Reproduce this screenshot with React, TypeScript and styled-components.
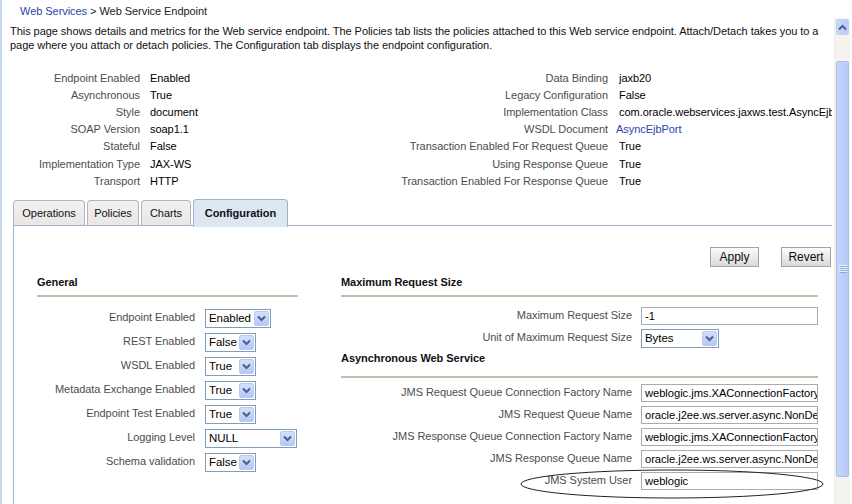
import React from "react";
import styled, { createGlobalStyle } from "styled-components";

const Global = createGlobalStyle`
  html, body { margin: 0; padding: 0; background: #fff; }
  body { font-family: Tahoma, "Liberation Sans", Arial, sans-serif; font-size: 11px; color: #000; overflow: hidden; letter-spacing: -0.05px; }
  * { box-sizing: border-box; }
`;

const Page = styled.div`
  width: 852px;
  height: 504px;
  position: relative;
  display: flex;
  flex-direction: column;
  border-left: 2px solid #c9d7ec;
  overflow: hidden;
`;

const Splitter = styled.div`
  position: absolute;
  left: -2px;
  top: 243px;
  width: 2px;
  height: 32px;
  background: #8c8c8c;
`;

const Breadcrumb = styled.div`
  height: 18px;
  padding: 4px 0 0 18px;
  line-height: 14px;
  color: #222;
`;

const Link = styled.span`
  color: #2b45a6;
`;

const Body = styled.div`
  flex: 1;
  display: flex;
  min-height: 0;
`;

const Main = styled.div`
  width: 830px;
  flex: none;
  overflow: hidden;
`;

const Description = styled.p`
  margin: 0;
  padding: 6px 0 0 8px;
  line-height: 14px;
  white-space: nowrap;
  color: #111;
  letter-spacing: -0.05px;
`;

const Info = styled.div`
  display: flex;
  margin-top: 17px;
`;

const InfoGrid = styled.div<{ $label: number; $gap: number; $w: number }>`
  display: grid;
  grid-template-columns: ${(p) => p.$label}px auto;
  column-gap: ${(p) => p.$gap}px;
  grid-auto-rows: 17.2px;
  width: ${(p) => p.$w}px;
  align-items: center;
  white-space: nowrap;
`;

const InfoLabel = styled.div`
  text-align: right;
  color: #4d4d4d;
`;

const InfoValue = styled.div<{ $link?: boolean }>`
  color: ${(p) => (p.$link ? "#2b45a6" : "#000")};
  overflow: hidden;
  margin-left: ${(p) => (p.$link ? "-3px" : "0")};
`;

const Tabs = styled.div`
  display: flex;
  align-items: flex-end;
  gap: 2px;
  margin: 9px 0 0 11px;
  height: 28px;
  position: relative;
  z-index: 1;
`;

const Tab = styled.div<{ $active?: boolean; $w: number }>`
  width: ${(p) => p.$w}px;
  height: ${(p) => (p.$active ? 28 : 26)}px;
  border: 1px solid ${(p) => (p.$active ? "#9fb4cf" : "#b4b4b4")};
  border-bottom: ${(p) => (p.$active ? "none" : "1px solid #9fb4cf")};
  border-radius: 4px 4px 0 0;
  background: ${(p) => (p.$active ? "#dde7f2" : "linear-gradient(#f2f2f2, #e6e6e6)")};
  font-weight: ${(p) => (p.$active ? "bold" : "normal")};
  color: #111;
  display: flex;
  align-items: center;
  justify-content: center;
  padding-bottom: ${(p) => (p.$active ? 1 : 0)}px;
  margin-bottom: ${(p) => (p.$active ? -1 : 0)}px;
`;

const Panel = styled.div`
  margin-left: 11px;
  margin-top: -1px;
  border-left: 1px solid #9fb4cf;
  border-top: 1px solid #9fb4cf;
  height: 300px;
  position: relative;
`;

const Toolbar = styled.div`
  display: flex;
  justify-content: flex-end;
  gap: 22px;
  padding: 21px 1px 0 0;
  height: 42px;
`;

const Button = styled.div<{ $w: number }>`
  width: ${(p) => p.$w}px;
  height: 20px;
  border: 1px solid #a3a3a3;
  background: linear-gradient(#fbfbfb, #e7e7e7 60%, #dadada);
  display: flex;
  align-items: center;
  justify-content: center;
  color: #111;
  font-size: 12px;
`;

const Columns = styled.div`
  display: flex;
  padding-left: 23px;
  gap: 43px;
`;

const Column = styled.div<{ $w: number }>`
  width: ${(p) => p.$w}px;
`;

const SectionHeader = styled.div<{ $pt: number; $pb: number }>`
  font-weight: bold;
  color: #111;
  line-height: 14px;
  padding-top: ${(p) => p.$pt}px;
  padding-bottom: ${(p) => p.$pb}px;
  border-bottom: 2px solid #c4bdae;
`;

const Form = styled.div<{ $label: number; $gap: number; $row: number; $mt: number }>`
  display: grid;
  grid-template-columns: ${(p) => p.$label}px auto;
  column-gap: ${(p) => p.$gap}px;
  grid-auto-rows: ${(p) => p.$row}px;
  align-items: center;
  margin-top: ${(p) => p.$mt}px;
  white-space: nowrap;
`;

const FormLabel = styled.div`
  text-align: right;
  color: #4d4d4d;
  margin-top: -3px;
  position: relative;
`;

const SelectBox = styled.div<{ $w: number }>`
  width: ${(p) => p.$w}px;
  height: 19px;
  border: 1px solid #7f9db9;
  background: #fff;
  display: flex;
  align-items: center;
  justify-content: space-between;
  padding: 0 1px 0 3px;
  color: #000;
  font-size: 11.5px;
`;

const DropBtn = styled.div`
  width: 15px;
  height: 15px;
  border-radius: 2px;
  background: linear-gradient(#d3e0fd, #b5c8f7);
  border: 1px solid #b9c9ef;
  display: flex;
  align-items: center;
  justify-content: center;
`;

const TextInput = styled.div<{ $w: number }>`
  width: ${(p) => p.$w}px;
  height: 18px;
  border: 1px solid #a8acb0;
  background: #fff;
  padding: 0 3px;
  display: flex;
  align-items: center;
  overflow: hidden;
  color: #000;
  font-size: 11.2px;
`;

const Oval = styled.svg`
  position: absolute;
  left: 179px;
  top: -5px;
  pointer-events: none;
  overflow: visible;
`;

const Scrollbar = styled.div`
  width: 16px;
  margin-left: 2px;
  background: #f4f3ee;
  display: flex;
  flex-direction: column;
  border-left: 1px solid #eeede5;
`;

const ScrollBtn = styled.div`
  height: 16px;
  margin: 1px 1px 0 1px;
  border-radius: 2px;
  background: linear-gradient(90deg, #c8d7fd, #b9cbf8);
  border: 1px solid #c1d2f7;
  display: flex;
  align-items: center;
  justify-content: center;
`;

const Track = styled.div`
  flex: 1;
  padding: 26px 1px 27px 1px;
  display: flex;
`;

const Thumb = styled.div`
  flex: 1;
  border-radius: 2px;
  background: linear-gradient(90deg, #c5d5fc, #b7caf6);
  border: 1px solid #a9bff0;
  display: flex;
  align-items: center;
  justify-content: center;
`;

const Grip = () => (
  <svg width="8" height="8" viewBox="0 0 8 8">
    {[1, 3, 5, 7].map((y) => (
      <line key={y} x1="0" x2="8" y1={y - 0.5} y2={y - 0.5} stroke="#eef3ff" strokeWidth="1" />
    ))}
    {[1, 3, 5, 7].map((y) => (
      <line key={"d" + y} x1="1" x2="8" y1={y + 0.5} y2={y + 0.5} stroke="#8fa8e0" strokeWidth="1" />
    ))}
  </svg>
);

const Chevron = ({ color = "#4a5f8a" }: { color?: string }) => (
  <svg width="9" height="7" viewBox="0 0 9 7">
    <path d="M1 1.5 L4.5 5 L8 1.5" fill="none" stroke={color} strokeWidth="2" />
  </svg>
);

const Select = ({ w, value }: { w: number; value: string }) => (
  <SelectBox $w={w}>
    <span>{value}</span>
    <DropBtn>
      <Chevron />
    </DropBtn>
  </SelectBox>
);

const leftInfo: [string, string][] = [
  ["Endpoint Enabled", "Enabled"],
  ["Asynchronous", "True"],
  ["Style", "document"],
  ["SOAP Version", "soap1.1"],
  ["Stateful", "False"],
  ["Implementation Type", "JAX-WS"],
  ["Transport", "HTTP"],
];

const rightInfo: [string, string, boolean?][] = [
  ["Data Binding", "jaxb20"],
  ["Legacy Configuration", "False"],
  ["Implementation Class", "com.oracle.webservices.jaxws.test.AsyncEjbBean"],
  ["WSDL Document", "AsyncEjbPort", true],
  ["Transaction Enabled For Request Queue", "True"],
  ["Using Response Queue", "True"],
  ["Transaction Enabled For Response Queue", "True"],
];

const general: [string, string, number][] = [
  ["Endpoint Enabled", "Enabled", 66],
  ["REST Enabled", "False", 51],
  ["WSDL Enabled", "True", 51],
  ["Metadata Exchange Enabled", "True", 51],
  ["Endpoint Test Enabled", "True", 51],
  ["Logging Level", "NULL", 92],
  ["Schema validation", "False", 51],
];

const jms: [string, string][] = [
  ["JMS Request Queue Connection Factory Name", "weblogic.jms.XAConnectionFactory"],
  ["JMS Request Queue Name", "oracle.j2ee.ws.server.async.NonDefaultRequestQueue"],
  ["JMS Response Queue Connection Factory Name", "weblogic.jms.XAConnectionFactory"],
  ["JMS Response Queue Name", "oracle.j2ee.ws.server.async.NonDefaultResponseQueue"],
];

export default function App() {
  return (
    <>
      <Global />
      <Page>
        <Splitter />
        <Breadcrumb>
          <Link>Web Services</Link> &gt; Web Service Endpoint
        </Breadcrumb>
        <Body>
          <Main>
            <Description>
              This page shows details and metrics for the Web service endpoint. The Policies tab lists the policies
              attached to this Web service endpoint. Attach/Detach takes you to a
              <br />
              page where you attach or detach policies. The Configuration tab displays the endpoint configuration.
            </Description>
            <Info>
              <InfoGrid $label={138} $gap={10} $w={378}>
                {leftInfo.map(([l, v]) => (
                  <React.Fragment key={l}>
                    <InfoLabel>{l}</InfoLabel>
                    <InfoValue>{v}</InfoValue>
                  </React.Fragment>
                ))}
              </InfoGrid>
              <InfoGrid $label={228} $gap={11} $w={452}>
                {rightInfo.map(([l, v, link]) => (
                  <React.Fragment key={l}>
                    <InfoLabel>{l}</InfoLabel>
                    <InfoValue $link={link}>{v}</InfoValue>
                  </React.Fragment>
                ))}
              </InfoGrid>
            </Info>
            <Tabs>
              <Tab $w={72}>Operations</Tab>
              <Tab $w={52}>Policies</Tab>
              <Tab $w={50}>Charts</Tab>
              <Tab $w={95} $active>
                Configuration
              </Tab>
            </Tabs>
            <Panel>
              <Toolbar>
                <Button $w={49}>Apply</Button>
                <Button $w={50}>Revert</Button>
              </Toolbar>
              <Columns>
                <Column $w={261}>
                  <SectionHeader $pt={7} $pb={6}>General</SectionHeader>
                  <Form $label={158} $gap={10} $row={24} $mt={9}>
                    {general.map(([l, v, w]) => (
                      <React.Fragment key={l}>
                        <FormLabel>{l}</FormLabel>
                        <Select w={w} value={v} />
                      </React.Fragment>
                    ))}
                  </Form>
                </Column>
                <Column $w={477}>
                  <SectionHeader $pt={7} $pb={6}>Maximum Request Size</SectionHeader>
                  <Form $label={291} $gap={9} $row={22} $mt={8}>
                    <FormLabel>Maximum Request Size</FormLabel>
                    <TextInput $w={177}>-1</TextInput>
                    <FormLabel>Unit of Maximum Request Size</FormLabel>
                    <Select w={78} value="Bytes" />
                  </Form>
                  <SectionHeader $pt={2} $pb={11}>Asynchronous Web Service</SectionHeader>
                  <Form $label={291} $gap={9} $row={22} $mt={4}>
                    {jms.map(([l, v]) => (
                      <React.Fragment key={l}>
                        <FormLabel>{l}</FormLabel>
                        <TextInput $w={177}>{v}</TextInput>
                      </React.Fragment>
                    ))}
                    <FormLabel>
                      JMS System User
                      <Oval width="304" height="30" viewBox="0 0 304 30">
                        <ellipse cx="152" cy="15" rx="151" ry="14" fill="none" stroke="#222" strokeWidth="1" />
                      </Oval>
                    </FormLabel>
                    <TextInput $w={177}>weblogic</TextInput>
                  </Form>
                </Column>
              </Columns>
            </Panel>
          </Main>
          <Scrollbar>
            <ScrollBtn>
              <svg width="9" height="7" viewBox="0 0 9 7">
                <path d="M1 5.5 L4.5 2 L8 5.5" fill="none" stroke="#4a5f8a" strokeWidth="2" />
              </svg>
            </ScrollBtn>
            <Track>
              <Thumb>
                <Grip />
              </Thumb>
            </Track>
          </Scrollbar>
        </Body>
      </Page>
    </>
  );
}
